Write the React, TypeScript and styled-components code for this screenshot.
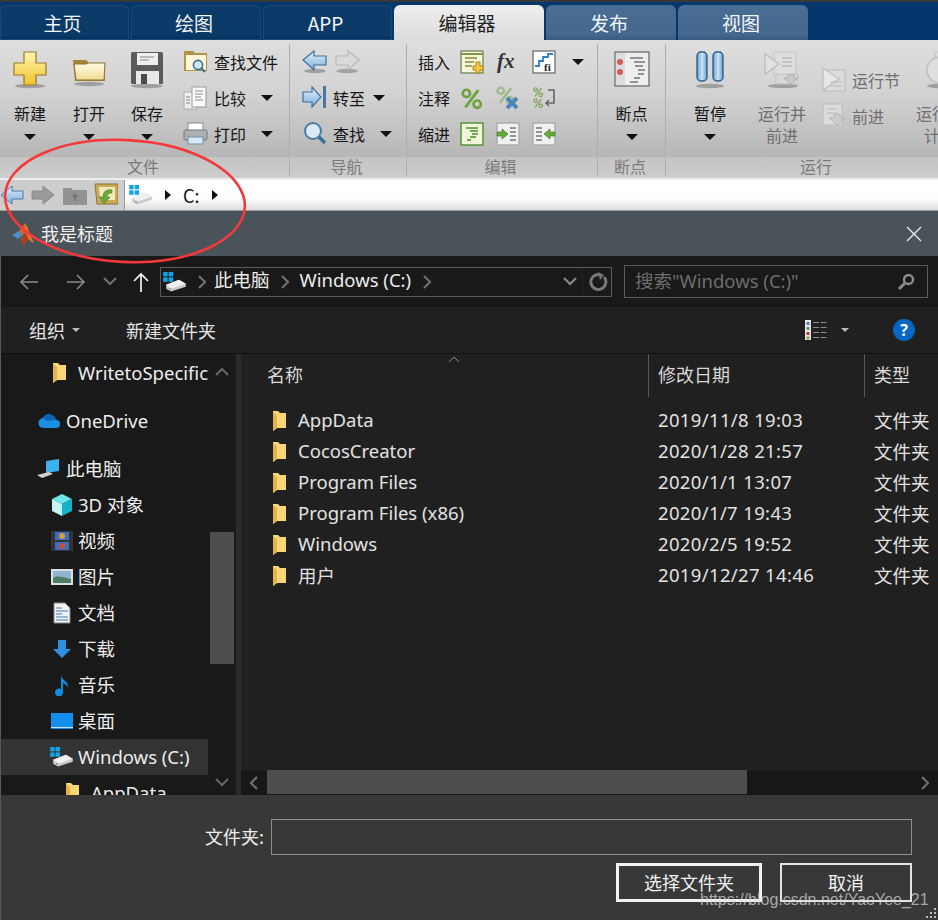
import React from "react";
import styled, { createGlobalStyle } from "styled-components";

const CJK = `"Noto Sans CJK SC", "Noto Sans", sans-serif`;
const UI = `"Noto Sans", "Noto Sans CJK SC", sans-serif`;

const Global = createGlobalStyle`
  html, body { margin: 0; padding: 0; background: #383838; overflow: hidden; }
  * { box-sizing: border-box; }
  #root { width: 938px; height: 920px; overflow: hidden; }
`;

const Page = styled.div`position: relative; width: 938px; height: 920px; overflow: hidden; display: flex; flex-direction: column; font-family: ${CJK};`;
const TabBar = styled.div`height: 38px; flex: none; margin-top: 2px; background: #04376b; display: flex; gap: 2px; align-items: flex-end; padding-top: 3px;`;
const Tab = styled.div<{ $w: number; $kind: "dark" | "active" | "light" }>`
  width: ${p => p.$w}px; height: 35px; flex: none; display: flex; align-items: center; justify-content: center;
  font-size: 19px; border-radius: 6px 6px 0 0; padding-right: 4px;
  color: ${p => p.$kind === "active" ? "#222" : "#f4f6f8"};
  background: ${p => p.$kind === "active" ? "linear-gradient(#eeeeee,#dcdcdc)" : p.$kind === "light" ? "linear-gradient(#4a6d93,#44678e 85%,#38597f)" : "linear-gradient(#0c3b69,#0a3a68 85%,#06305c)"};
  box-shadow: ${p => p.$kind === "dark" ? "inset 0 0 0 1px #1c4674" : "none"};
`;
const Ribbon = styled.div`height: 138px; flex: none; display: flex; background: linear-gradient(#dedede, #d2d2d2 40%, #b6b6b6 85%, #c4c4c4 85%, #cdcdcd);`;
const Group = styled.div<{ $w: number }>`width: ${p => p.$w}px; flex: none; display: flex; flex-direction: column; padding-top: 4px; position: relative;
  &:not(:last-child)::after { content: ""; position: absolute; right: 0; top: 4px; bottom: 3px; width: 1px; background: #aeaeae; }`;
const GroupBody = styled.div<{ $pad?: number }>`height: 113px; display: flex; padding-left: ${p => p.$pad ?? 0}px;`;
const GroupLabel = styled.div`height: 18px; padding-right: 4px; font-size: 16px; line-height: 18px; color: #7a7a7a; text-align: center;`;
const Big = styled.div<{ $w: number; $off?: boolean }>`width: ${p => p.$w}px; flex: none; display: flex; flex-direction: column; align-items: center; padding-top: 6px; font-size: 16px; color: ${p => p.$off ? "#6e6e6e" : "#161616"};`;
const BigIcon = styled.div`height: 40px; display: flex; align-items: center; justify-content: center;`;
const BigText = styled.div`margin-top: 12px; line-height: 22px; text-align: center; white-space: nowrap;`;
const Caret = styled.span<{ $m?: number }>`display: inline-block; width: 0; height: 0; flex: none; margin-top: ${p => p.$m ?? 0}px; border-left: 6px solid transparent; border-right: 6px solid transparent; border-top: 6px solid #111;`;
const BigCaret = styled(Caret)`margin-top: 10px;`;
const SmallCol = styled.div<{ $w: number; $pt?: number; $pl?: number }>`width: ${p => p.$w}px; flex: none; display: flex; flex-direction: column; gap: 12px; padding-top: ${p => p.$pt ?? 6}px; padding-left: ${p => p.$pl ?? 0}px;`;
const SmallRow = styled.div<{ $off?: boolean }>`height: 24px; display: flex; align-items: center; gap: 6px; font-size: 16px; white-space: nowrap; color: ${p => p.$off ? "#6e6e6e" : "#161616"};`;
const RowLabel = styled.span<{ $w?: number }>`width: ${p => p.$w ? p.$w + "px" : "auto"}; flex: none;`;
const IconGrid = styled.div`display: grid; grid-template-columns: 42px 36px 36px 40px 26px; grid-auto-rows: 24px; row-gap: 12px; padding: 6px 0 0 11px; font-size: 16px; color: #161616; align-items: center; justify-items: start;`;

const AddressBar = styled.div`height: 33px; flex: none; border-top: 2px solid #eee; display: flex; background: #cdcdcd; border-bottom: 1px solid #9a9a9a;`;
const AddressTools = styled.div`width: 124px; flex: none; display: flex; align-items: center; justify-content: space-between; padding: 0 6px 0 0;`;
const AddressPath = styled.div`flex: 1; display: flex; align-items: center; gap: 12px; padding-left: 4px; border-left: 1px solid #9a9a9a; background: linear-gradient(#fff 60%, #ddd); font-size: 18px; color: #111;`;
const PathCaret = styled.span`width: 0; height: 0; border-top: 5px solid transparent; border-bottom: 5px solid transparent; border-left: 6px solid #111;`;

const TitleBar = styled.div`height: 45px; flex: none; background: #4b535a; display: flex; align-items: center; padding: 0 16px 0 12px; color: #f2f2f2; font-size: 18px; gap: 5px;`;
const TitleText = styled.div`flex: 1; padding-bottom: 2px;`;

const Dialog = styled.div`flex: 1; min-height: 0; display: flex; flex-direction: column; border-left: 1px solid #55595c; font-family: ${UI};`;
const NavBar = styled.div`height: 51px; flex: none; background: #191919; display: flex; align-items: center; padding-left: 18px; color: #eee; font-size: 18.5px;`;
const NavBtn = styled.div<{ $w: number }>`width: ${p => p.$w}px; flex: none; display: flex; align-items: center; justify-content: flex-start;`;
const PathBox = styled.div`width: 452px; height: 30px; flex: none; border: 1px solid #5a5a5a; display: flex; align-items: center; padding-left: 2px;`;
const PathText = styled.span<{ $ml?: number }>`margin-left: ${p => p.$ml ?? 0}px; color: #ececec; line-height: 28px; padding-bottom: 3px;`;
const PathEnd = styled.div`margin-left: auto; height: 100%; display: flex; align-items: center; gap: 5px; padding-right: 3px;`;
const PathSep = styled.div`width: 1px; height: 100%; background: #242424;`;
const SearchBox = styled.div`width: 304px; height: 33px; flex: none; margin-left: 12px; border: 1px solid #5a5a5a; display: flex; align-items: center; justify-content: space-between; padding: 0 12px 0 10px; color: #6d6d6d; font-size: 18.5px;`;
const SearchText = styled.span`padding-bottom: 4px;`;
const ToolBar = styled.div`height: 47px; flex: none; background: #202020; border-bottom: 1px solid #111; display: flex; align-items: center; padding-left: 28px; padding-right: 23px; color: #e6e6e6; font-size: 18px;`;
const ToolCaret = styled.span<{ $ml: number }>`margin-left: ${p => p.$ml}px; width: 0; height: 0; border-left: 4px solid transparent; border-right: 4px solid transparent; border-top: 4px solid #bbb;`;
const ToolText = styled.span<{ $ml?: number }>`margin-left: ${p => p.$ml ?? 0}px;`;
const ToolSpacer = styled.div`flex: 1;`;
const HelpDot = styled.div`width: 22px; height: 22px; margin-left: 44px; border-radius: 50%; background: #0766c4; color: #fff; font-size: 16px; font-weight: 700; display: flex; align-items: center; justify-content: center;`;

const Body = styled.div`height: 441px; flex: none; display: flex; overflow: hidden;`;
const Side = styled.div`width: 235px; flex: none; display: flex; background: #191919;`;
const Tree = styled.div`width: 207px; flex: none; padding-top: 1px; overflow: hidden;`;
const TreeRow = styled.div<{ $pad: number; $top?: number; $sel?: boolean; $gap?: number }>`
  height: 36px; flex: none; margin-top: ${p => p.$top ?? 0}px; padding-left: ${p => p.$pad}px; display: flex; align-items: center; gap: ${p => p.$gap ?? 6}px;
  color: #ededed; font-size: 18.5px; white-space: nowrap; overflow: hidden; background: ${p => p.$sel ? "#333333" : "transparent"};
`;
const TreeText = styled.span`padding-bottom: 2px;`;
const TreeIcon = styled.div<{ $w: number }>`width: ${p => p.$w}px; flex: none; display: flex; justify-content: center; align-items: center;`;
const SideScroll = styled.div`width: 28px; flex: none; display: flex; flex-direction: column; align-items: center;`;
const Chevron = styled.div<{ $mt: number }>`margin-top: ${p => p.$mt}px; height: 12px; display: flex;`;
const Thumb = styled.div`width: 24px; height: 132px; margin-top: 153px; background: #4d4d4d;`;
const Gutter = styled.div`width: 5px; flex: none; background: #2b2b2b;`;
const Main = styled.div`flex: 1; min-width: 0; background: #202020; display: flex; flex-direction: column; position: relative;`;
const HeadRow = styled.div`height: 43px; flex: none; display: grid; grid-template-columns: 407px 216px 1fr; color: #d8d8d8; font-size: 18px; margin-bottom: 8px;`;
const HeadCell = styled.div<{ $pad: number; $line?: boolean }>`display: flex; align-items: center; padding-left: ${p => p.$pad}px; padding-bottom: 3px; white-space: nowrap; border-left: ${p => p.$line ? "1px solid #585858" : "none"}; overflow: hidden;`;
const SortMark = styled.div`position: absolute; left: 207px; top: 2px;`;
const FileRow = styled.div`height: 31px; flex: none; display: grid; grid-template-columns: 407px 216px 1fr; align-items: center; color: #e2e2e2; font-size: 18.5px; white-space: nowrap;`;
const FileName = styled.div`display: flex; align-items: center; gap: 11px; padding-left: 31px;`;
const FileText = styled.span`padding-bottom: 2px;`;
const FileCell = styled.div<{ $track?: number }>`padding-left: 10px; padding-bottom: 2px; overflow: hidden; letter-spacing: ${p => p.$track ?? 0}px;`;
const HScroll = styled.div`margin-top: auto; height: 25px; flex: none; background: #171717; display: flex; align-items: center; justify-content: space-between; position: relative; padding: 0 8px;`;
const HThumb = styled.div`position: absolute; left: 26px; top: 0; bottom: 1px; width: 480px; background: #4d4d4d;`;

const Footer = styled.div`flex: 1; background: #383838; color: #eee; font-size: 18px; font-family: ${CJK}; display: flex; flex-direction: column; align-items: flex-end; padding: 24px 26px 0 0;`;
const FieldRow = styled.div`display: flex; align-items: center; gap: 7px;`;
const FieldLabel = styled.span`padding-bottom: 2px;`;
const FieldInput = styled.div`width: 641px; height: 36px; border: 1px solid #8d8d8d;`;
const Buttons = styled.div`display: flex; margin-top: 8px; gap: 18px;`;
const Btn = styled.div<{ $w: number; $primary?: boolean }>`width: ${p => p.$w}px; height: 39px; padding-bottom: 2px; border: ${p => p.$primary ? "3px solid #f2f2f2" : "2px solid #e4e4e4"}; display: flex; align-items: center; justify-content: center; color: #f2f2f2;`;

const Circle = styled.svg`position: absolute; left: 0; top: 130px; pointer-events: none;`;
const Watermark = styled.div`position: absolute; left: 700px; top: 890px; font-family: "Liberation Sans", sans-serif; font-size: 16px; line-height: 20px; color: rgba(214,214,214,.72); white-space: nowrap;`;
const Grip = styled.svg`position: absolute; right: 0; bottom: 0;`;
const Defs = styled.svg`width: 0; height: 0; display: block; position: absolute;`;

const S = ({ w, h, children }: { w: number; h: number; children: React.ReactNode }) => (
  <svg width={w} height={h} viewBox={`0 0 ${w} ${h}`} style={{ display: "block", flex: "none" }}>{children}</svg>
);

const Shadow = ({ x, y, w }: { x: number; y: number; w: number }) => <ellipse cx={x} cy={y} rx={w} ry="2.2" fill="#000" opacity=".25" />;

const Plus = () => <S w={36} h={38}><Shadow x={18} y={35} w={15} /><path d="M12 1h12v11h10v12H24v10H12V24H2V12h10z" fill="url(#gy)" stroke="#9a7a28" strokeWidth="1.2" /></S>;
const Folder = () => <S w={36} h={38}><Shadow x={18} y={33} w={15} /><path d="M2 9h13l3 3h15l1 18H4z" fill="#a9843f" /><path d="M3 13h12l2-1h17l-1 17H5z" fill="url(#gf)" stroke="#8d6c2c" /></S>;
const Save = () => <S w={36} h={38}><Shadow x={18} y={35} w={16} /><rect x="2" y="1" width="32" height="32" rx="1.5" fill="#5b5b5b" /><rect x="8" y="2" width="21" height="12" fill="#efefef" /><path d="M11 6h14M11 9h9" stroke="#888" /><rect x="7" y="20" width="23" height="13" fill="#e8e8e8" /><rect x="12" y="23" width="6" height="10" fill="#4b4b4b" /></S>;
const FindFile = () => <S w={25} h={24}><path d="M1 1h9l2 2h12v18H1z" fill="#b49248" /><path d="M3 5h20v15H3z" fill="#fff7d8" /><circle cx="15" cy="15" r="4.6" fill="#cfe7f5" stroke="#3d6c94" strokeWidth="1.6" /><path d="M18 18l4 4" stroke="#3d6c94" strokeWidth="2.2" /></S>;
const Compare = () => <S w={25} h={24}><rect x="1" y="6" width="13" height="17" fill="#eee" stroke="#aaa" /><rect x="9" y="1" width="14" height="20" fill="#fafafa" stroke="#999" /><path d="M12 5h8M12 8h8M12 11h6M12 14h8M3 11h4M3 14h4M3 17h4" stroke="#888" /></S>;
const Printer = () => <S w={25} h={24}><rect x="5" y="1" width="15" height="8" fill="#fff" stroke="#888" /><rect x="1" y="8" width="23" height="10" rx="1.5" fill="#a9b0b6" stroke="#777" /><rect x="5" y="15" width="15" height="7" fill="#d9e8f3" stroke="#6f93ad" /></S>;
const ArrowL = () => <S w={26} h={24}><Shadow x={13} y={21} w={11} /><path d="M1 10L12 1v5h12v9H12v5z" fill="url(#gb)" stroke="#3f6f9d" strokeWidth="1.2" /></S>;
const ArrowR = () => <S w={26} h={24}><Shadow x={13} y={21} w={11} /><path d="M25 10L14 1v5H2v9h12v5z" fill="#dadada" stroke="#b8b8b8" strokeWidth="1.2" /></S>;
const GoTo = () => <S w={25} h={24}><path d="M1 6h9V1l9 10-9 10v-5H1z" fill="url(#gb)" stroke="#3f6f9d" strokeWidth="1.2" /><rect x="21" y="0" width="3" height="22" fill="#4a78a3" /></S>;
const Glass = () => <S w={25} h={26}><circle cx="11" cy="10" r="8" fill="#dbeaf6" stroke="#4a7ea8" strokeWidth="2" /><path d="M17 16l6 6" stroke="#3b6c92" strokeWidth="3.4" /></S>;
const PageIcon = ({ children, border = "#999", fill = "#eef3e6" }: { children?: React.ReactNode; border?: string; fill?: string }) => <S w={24} h={24}><rect x="1" y="1" width="22" height="22" fill={fill} stroke={border} strokeWidth="1.4" />{children}</S>;
const Insert = () => <PageIcon border="#7e8a60" fill="#f5f5d8"><path d="M1.5 4h21" stroke="#7e9650" strokeWidth="2" /><path d="M5 8h12M5 12h9M5 16h7" stroke="#8c8c3c" strokeWidth="1.5" /><path d="M16 12h4v4h3v4h-3v3h-4v-3h-3v-4h3z" fill="#f4c63d" stroke="#a68422" /></PageIcon>;
const PctMark = ({ c, x, y, s }: { c: string; x: number; y: number; s: number }) => <g transform={`translate(${x} ${y}) scale(${s})`} stroke={c} fill="none"><circle cx="5" cy="5" r="3.4" strokeWidth="2.4" /><circle cx="15" cy="15" r="3.4" strokeWidth="2.4" /><path d="M16 2L4 18" strokeWidth="2.6" /></g>;
const Comment = () => <S w={24} h={24}><PctMark c="#6fa23a" x={1} y={2} s={1.08} /></S>;
const Uncomment = () => <S w={24} h={24}><PctMark c="#9fb98a" x={0} y={0} s={.95} /><path d="M11 12l10 10M21 12L11 22" stroke="#4f86b9" strokeWidth="4" /></S>;
const Wrap = () => <S w={24} h={24}><PctMark c="#7fa55a" x={1} y={1} s={.52} /><PctMark c="#7fa55a" x={1} y={12} s={.52} /><path d="M16 4h6v13h-7M17 14l-3 3 3 3" stroke="#666" strokeWidth="1.6" fill="none" /></S>;
const Smart = () => <PageIcon border="#4e8f2f" fill="#eff6d9"><path d="M6 6h12M10 9h8M12 12h6M10 15h6M7 18h4" stroke="#4e8f2f" strokeWidth="1.5" /></PageIcon>;
const IndentIn = () => <PageIcon fill="#f1f1f1" border="#aaa"><path d="M14 6h6M14 10h6M14 14h6M14 18h6" stroke="#777" strokeWidth="1.4" /><path d="M1 10h5V7l6 5-6 5v-3H1z" fill="#69a83b" stroke="#487a25" strokeWidth=".7" /></PageIcon>;
const IndentOut = () => <PageIcon fill="#f1f1f1" border="#aaa"><path d="M4 6h6M4 10h6M4 14h6M4 18h6" stroke="#777" strokeWidth="1.4" /><path d="M23 10h-5V7l-6 5 6 5v-3h5z" fill="#69a83b" stroke="#487a25" strokeWidth=".7" /></PageIcon>;
const FiIcon = () => <S w={24} h={24}><rect x="1" y="1" width="22" height="22" fill="#fff" stroke="#777" strokeWidth="1.4" /><path d="M3 16h4v-5h4V7h5V4h5" stroke="#2e7fca" strokeWidth="1.8" fill="none" /><text x="12" y="21" fontSize="11" fontWeight="700" fill="#222" fontFamily="Liberation Serif, serif">fi</text></S>;
const Fx = () => <S w={24} h={24}><text x="1" y="18" fontSize="21" fontStyle="italic" fontWeight="700" fill="#333" fontFamily="Liberation Serif, serif">fx</text></S>;
const Breakpoints = () => <S w={36} h={38}><rect x="1" y="1" width="34" height="34" fill="#eee" stroke="#777" strokeWidth="1.4" /><rect x="2" y="2" width="9" height="32" fill="#dcdcdc" /><circle cx="6" cy="11" r="3" fill="#d65a50" /><circle cx="6" cy="21" r="3" fill="#d65a50" /><path d="M16 7h13M20 11h11M21 15h8M24 19h7M24 23h6M20 27h6M16 31h8" stroke="#777" strokeWidth="1.3" /></S>;
const Pause = () => <S w={30} h={38}><Shadow x={15} y={35} w={14} /><rect x="2" y="1" width="10" height="29" rx="4" fill="url(#gp)" stroke="#2f5f8e" strokeWidth="1.4" /><rect x="18" y="1" width="10" height="29" rx="4" fill="url(#gp)" stroke="#2f5f8e" strokeWidth="1.4" /></S>;
const RunAdvance = () => <S w={36} h={38}><Shadow x={19} y={35} w={15} /><path d="M10 1h22v24H10z" fill="#dedede" stroke="#c2c2c2" /><path d="M1 3l14 10L1 23z" fill="#e2e2e2" stroke="#bdbdbd" strokeWidth="1.3" /><path d="M18 7h10M18 11h10M18 15h10" stroke="#bbb" strokeWidth="1.3" /><path d="M12 23h22v10H12z" fill="#d8d8d8" stroke="#c0c0c0" /><path d="M24 24h6v3h4l-7 6-7-6h4z" fill="#c8c8c8" stroke="#b0b0b0" /></S>;
const RunSection = () => <S w={24} h={26}><rect x="3" y="3" width="20" height="21" fill="#dcdcdc" stroke="#bcbcbc" /><path d="M1 1l16 11L1 23z" fill="#e6e6e6" stroke="#bdbdbd" strokeWidth="1.2" /><path d="M8 15h13M8 19h13" stroke="#bbb" /></S>;
const Advance = () => <S w={24} h={26}><rect x="1" y="1" width="19" height="21" fill="#dcdcdc" stroke="#bcbcbc" /><path d="M5 6h10M5 10h10" stroke="#bbb" /><path d="M12 11h6v4h5l-8 7-8-7h5z" fill="#cecece" stroke="#b4b4b4" /></S>;
const RunTime = () => <S w={30} h={38}><rect x="10" y="1" width="20" height="12" fill="#dcdcdc" stroke="#c0c0c0" /><circle cx="15" cy="19" r="13" fill="#dedede" stroke="#bfbfbf" strokeWidth="1.5" /><path d="M15 11v8h6" stroke="#b8b8b8" strokeWidth="1.6" fill="none" /><Shadow x={15} y={35} w={13} /></S>;

const BarBack = () => <S w={24} h={22}><path d="M1 11L12 2v5h11v8H12v5z" fill="url(#gb)" stroke="#4a7ba8" /></S>;
const BarFwd = () => <S w={24} h={22}><path d="M23 11L12 2v5H1v8h11v5z" fill="#9a9a9a" stroke="#8a8a8a" /></S>;
const BarUp = () => <S w={24} h={20}><path d="M0 3h8l2 2h14v15H0z" fill="#929292" /><path d="M12 8l-4 4h3v4h2v-4h3z" fill="#777" /></S>;
const BarHist = () => <S w={24} h={24}><path d="M1 1h23v20H3z" fill="#c9ab57" stroke="#8a7232" /><path d="M5 4h16v13H6z" fill="#f4e8bf" /><path d="M18 7c-6-1-9 2-9 7H5l5 7 6-7h-3c0-3 2-4 5-4z" fill="#6da936" stroke="#457a1f" strokeWidth=".6" /></S>;
const Drive = ({ w = 24 }: { w?: number }) => <svg width={w} height={w * 0.9} viewBox="0 0 24 22" style={{ display: "block", flex: "none" }}><g fill="#10a5e8"><rect x="0" y="1" width="4.5" height="4.5" /><rect x="5.5" y="1" width="4.5" height="4.5" /><rect x="0" y="6.5" width="4.5" height="4.5" /><rect x="5.5" y="6.5" width="4.5" height="4.5" /></g><path d="M3 14l13-5 7 4v3L8 21l-5-3z" fill="#c9c9c9" /><path d="M3 14l13-5 7 4-15 5z" fill="#f0f0f0" /><circle cx="7" cy="18" r="1" fill="#4ec24e" /></svg>;
const MatlabLogo = () => <S w={24} h={24}><path d="M0 13l7-4 4 4-5 4z" fill="#4a90c4" /><path d="M7 9l6-8 3 5-5 7z" fill="#c9662d" /><path d="M13 1c3 5 6 14 9 20-3-1-5-3-6-5l-4 7-3-6 4-6z" fill="#e5742b" /><path d="M11 13l-2 6 3 4 4-7-2-5z" fill="#b33a22" /></S>;
const Close = () => <S w={16} h={16}><path d="M1 1l14 14M15 1L1 15" stroke="#f0f0f0" strokeWidth="1.3" /></S>;
const NavArrow = ({ dir, c }: { dir: "l" | "r"; c: string }) => <S w={20} h={18}>{dir === "l" ? <path d="M19 9H2M9 2L2 9l7 7" stroke={c} strokeWidth="1.6" fill="none" /> : <path d="M1 9h17M11 2l7 7-7 7" stroke={c} strokeWidth="1.6" fill="none" />}</S>;
const NavUp = () => <S w={16} h={20}><path d="M8 20V2M1 9l7-7 7 7" stroke="#f4f4f4" strokeWidth="1.7" fill="none" /></S>;
const ChevDown = ({ c = "#666", w = 14 }: { c?: string; w?: number }) => <svg width={w} height={9} viewBox="0 0 14 9" style={{ display: "block", flex: "none" }}><path d="M1 1l6 6 6-6" stroke={c} strokeWidth="2.2" fill="none" /></svg>;
const ChevUp = ({ c = "#666" }: { c?: string }) => <svg width={14} height={9} viewBox="0 0 14 9" style={{ display: "block" }}><path d="M1 8l6-6 6 6" stroke={c} strokeWidth="2.2" fill="none" /></svg>;
const ChevRight = ({ ml = 0, c = "#6f6f6f" }: { ml?: number; c?: string }) => <svg width={9} height={14} viewBox="0 0 9 14" style={{ display: "block", flex: "none", marginLeft: ml, zIndex: 1 }}><path d="M1 1l6 6-6 6" stroke={c} strokeWidth="2.2" fill="none" /></svg>;
const ChevLeft = ({ c = "#6f6f6f" }: { c?: string }) => <svg width={9} height={14} viewBox="0 0 9 14" style={{ display: "block", flex: "none", zIndex: 1 }}><path d="M8 1L2 7l6 6" stroke={c} strokeWidth="2.2" fill="none" /></svg>;
const Refresh = () => <S w={20} h={20}><path d="M16 5a7.5 7.5 0 1 1-4-2.4" stroke="#777" strokeWidth="3" fill="none" /><path d="M10 0l6 3-4 5z" fill="#777" /></S>;
const SearchMag = () => <S w={18} h={18}><circle cx="11.5" cy="6.5" r="4.5" fill="none" stroke="#8a8a8a" strokeWidth="2.4" /><path d="M8 10l-6 6" stroke="#8a8a8a" strokeWidth="3" /></S>;
const ViewIcon = () => <S w={22} h={20}><rect x="0" y="0" width="6" height="20" fill="#e8e8e8" /><rect x="1.5" y="2" width="3" height="3" fill="#4b7fa8" /><rect x="1.5" y="7" width="3" height="3" fill="#5b9a5b" /><rect x="1.5" y="12" width="3" height="3" fill="#b63a2c" /><rect x="1.5" y="16.5" width="3" height="3" fill="#a89a3a" /><path d="M8 2.5h14M8 7.5h14M8 12.5h14M8 17.5h14" stroke="#8a8a8a" strokeDasharray="6 1.5" /></S>;
const WinFolder = () => <S w={15} h={22}><path d="M1 1h5l2 2h6v15H5l-4 3z" fill="#f9d777" /><path d="M1 2v19l4-3V5z" fill="#e4b44a" /></S>;
const OneDrive = () => <S w={24} h={16}><path d="M7 15a5 5 0 0 1-1-10 7 7 0 0 1 13 2 4 4 0 0 1 0 8z" fill="#1a8fe3" /><path d="M6 5a7 7 0 0 1 13 2L10 8z" fill="#0b63b5" /></S>;
const PC = () => <S w={24} h={20}><path d="M9 2l13-2v12l-13 2z" fill="#3db0f0" /><path d="M0 16l12-3 4 2-11 4z" fill="#cfcfcf" /></S>;
const Cube = () => <S w={22} h={22}><path d="M11 0l10 5-10 5L1 5z" fill="#6fe4ea" /><path d="M1 5l10 5v12L1 17z" fill="#c6f4f6" /><path d="M21 5l-10 5v12l10-5z" fill="#15b3c5" /></S>;
const Film = () => <S w={22} h={20}><rect width="22" height="20" fill="#333" /><rect x="4" y="1" width="14" height="8" fill="#3a6fc4" /><rect x="4" y="11" width="14" height="8" fill="#3a6fc4" /><circle cx="11" cy="5" r="3" fill="#d8a03c" /><circle cx="11" cy="15" r="3" fill="#c4503c" /></S>;
const Picture = () => <S w={22} h={16}><rect width="22" height="16" fill="#dedede" /><rect x="2" y="2" width="18" height="12" fill="#8fb5d3" /><path d="M2 9c5-3 9-1 18 1v4H2z" fill="#4f7d66" /></S>;
const DocIcon = () => <S w={18} h={22}><path d="M1 1h11l5 5v15H1z" fill="#f2f2f2" stroke="#888" /><path d="M3 6h6M3 9h12M3 12h6M3 15h12M3 18h12" stroke="#3f7fbf" /></S>;
const Down = () => <S w={20} h={20}><path d="M6 1h8v9h5l-9 9-9-9h5z" fill="#2d8fe0" /></S>;
const Music = () => <S w={16} h={22}><path d="M7 1c0 5 8 6 7 13-1-3-3-4-5-5v9a4 4 0 1 1-2-3z" fill="#0f8ee0" /></S>;
const Desktop = () => <S w={22} h={16}><rect width="22" height="16" fill="#1490ec" /><rect y="14" width="22" height="1" fill="#bfe2fb" /></S>;
const Sort = () => <S w={12} h={7}><path d="M1 6l5-5 5 5" stroke="#8a8a8a" fill="none" /></S>;

const files = [
  ["AppData", "2019/11/8 19:03"],
  ["CocosCreator", "2020/1/28 21:57"],
  ["Program Files", "2020/1/1 13:07"],
  ["Program Files (x86)", "2020/1/7 19:43"],
  ["Windows", "2020/2/5 19:52"],
  ["用户", "2019/12/27 14:46"],
];

export default function App() {
  return (
    <Page>
      <Global />
      <Defs>
        <defs>
          <linearGradient id="gy" x1="0" y1="0" x2="0" y2="1"><stop offset="0" stopColor="#fff6b0" /><stop offset="1" stopColor="#f0c22e" /></linearGradient>
          <linearGradient id="gf" x1="0" y1="0" x2="0" y2="1"><stop offset="0" stopColor="#fffbe4" /><stop offset="1" stopColor="#f3dc95" /></linearGradient>
          <linearGradient id="gb" x1="0" y1="0" x2="0" y2="1"><stop offset="0" stopColor="#e2f0fa" /><stop offset="1" stopColor="#79b0dc" /></linearGradient>
          <linearGradient id="gp" x1="0" y1="0" x2="1" y2="0"><stop offset="0" stopColor="#5d9ccf" /><stop offset=".5" stopColor="#cfe5f5" /><stop offset="1" stopColor="#5d9ccf" /></linearGradient>
        </defs>
      </Defs>
      <TabBar>
        <Tab $w={129} $kind="dark">主页</Tab>
        <Tab $w={130} $kind="dark">绘图</Tab>
        <Tab $w={129} $kind="dark">APP</Tab>
        <Tab $w={150} $kind="active">编辑器</Tab>
        <Tab $w={130} $kind="light">发布</Tab>
        <Tab $w={130} $kind="light">视图</Tab>
      </TabBar>
      <Ribbon>
        <Group $w={290}>
          <GroupBody>
            <Big $w={60}><BigIcon><Plus /></BigIcon><BigText>新建</BigText><BigCaret /></Big>
            <Big $w={58}><BigIcon><Folder /></BigIcon><BigText>打开</BigText><BigCaret /></Big>
            <Big $w={58}><BigIcon><Save /></BigIcon><BigText>保存</BigText><BigCaret /></Big>
            <SmallCol $w={114} $pt={6} $pl={7}>
              <SmallRow><FindFile /><span>查找文件</span></SmallRow>
              <SmallRow><Compare /><RowLabel $w={41}>比较</RowLabel><Caret /></SmallRow>
              <SmallRow><Printer /><RowLabel $w={41}>打印</RowLabel><Caret /></SmallRow>
            </SmallCol>
          </GroupBody>
          <GroupLabel>文件</GroupLabel>
        </Group>
        <Group $w={117}>
          <GroupBody $pad={12}>
            <SmallCol $w={104} $pt={6}>
              <SmallRow><ArrowL /><ArrowR /></SmallRow>
              <SmallRow><GoTo /><RowLabel $w={34}>转至</RowLabel><Caret /></SmallRow>
              <SmallRow><Glass /><RowLabel $w={41}>查找</RowLabel><Caret /></SmallRow>
            </SmallCol>
          </GroupBody>
          <GroupLabel>导航</GroupLabel>
        </Group>
        <Group $w={191}>
          <GroupBody>
            <IconGrid>
              <span>插入</span><Insert /><Fx /><FiIcon /><Caret />
              <span>注释</span><Comment /><Uncomment /><Wrap /><i />
              <span>缩进</span><Smart /><IndentIn /><IndentOut /><i />
            </IconGrid>
          </GroupBody>
          <GroupLabel>编辑</GroupLabel>
        </Group>
        <Group $w={68}>
          <GroupBody>
            <Big $w={67}><BigIcon><Breakpoints /></BigIcon><BigText>断点</BigText><BigCaret /></Big>
          </GroupBody>
          <GroupLabel>断点</GroupLabel>
        </Group>
        <Group $w={304}>
          <GroupBody>
            <Big $w={88}><BigIcon><Pause /></BigIcon><BigText>暂停</BigText><BigCaret /></Big>
            <Big $w={56} $off><BigIcon><RunAdvance /></BigIcon><BigText>运行并<br />前进</BigText></Big>
            <SmallCol $w={104} $pt={24} $pl={12}>
              <SmallRow $off><RunSection /><span>运行节</span></SmallRow>
              <SmallRow $off><Advance /><span>前进</span></SmallRow>
            </SmallCol>
            <Big $w={52} $off><BigIcon><RunTime /></BigIcon><BigText>运行并<br />计时</BigText></Big>
          </GroupBody>
          <GroupLabel>运行</GroupLabel>
        </Group>
      </Ribbon>
      <AddressBar>
        <AddressTools><BarBack /><BarFwd /><BarUp /><BarHist /></AddressTools>
        <AddressPath><Drive /><PathCaret /><span>C:</span><PathCaret /></AddressPath>
      </AddressBar>
      <TitleBar><MatlabLogo /><TitleText>我是标题</TitleText><Close /></TitleBar>
      <Dialog>
        <NavBar>
          <NavBtn $w={47}><NavArrow dir="l" c="#8a8a8a" /></NavBtn>
          <NavBtn $w={37}><NavArrow dir="r" c="#8a8a8a" /></NavBtn>
          <NavBtn $w={30}><ChevDown c="#6f6f6f" /></NavBtn>
          <NavBtn $w={27}><NavUp /></NavBtn>
          <PathBox>
            <Drive />
            <ChevRight ml={11} />
            <PathText $ml={7}>此电脑</PathText>
            <ChevRight ml={11} />
            <PathText $ml={10}>Windows (C:)</PathText>
            <ChevRight ml={12} />
            <PathEnd><ChevDown c="#8a8a8a" /><PathSep /><Refresh /></PathEnd>
          </PathBox>
          <SearchBox><SearchText>搜索"Windows (C:)"</SearchText><SearchMag /></SearchBox>
        </NavBar>
        <ToolBar>
          <ToolText>组织</ToolText><ToolCaret $ml={7} />
          <ToolText $ml={46}>新建文件夹</ToolText>
          <ToolSpacer />
          <ViewIcon /><ToolCaret $ml={14} />
          <HelpDot>?</HelpDot>
        </ToolBar>
        <Body>
          <Side>
            <Tree>
              <TreeRow $pad={49} $gap={10}><TreeIcon $w={18}><WinFolder /></TreeIcon><TreeText>WritetoSpecific</TreeText></TreeRow>
              <TreeRow $pad={35} $top={12} $gap={5}><TreeIcon $w={25}><OneDrive /></TreeIcon><TreeText>OneDrive</TreeText></TreeRow>
              <TreeRow $pad={36} $top={12} $gap={5}><TreeIcon $w={24}><PC /></TreeIcon><TreeText>此电脑</TreeText></TreeRow>
              <TreeRow $pad={49} $gap={5}><TreeIcon $w={23}><Cube /></TreeIcon><TreeText>3D 对象</TreeText></TreeRow>
              <TreeRow $pad={49} $gap={5}><TreeIcon $w={23}><Film /></TreeIcon><TreeText>视频</TreeText></TreeRow>
              <TreeRow $pad={49} $gap={5}><TreeIcon $w={23}><Picture /></TreeIcon><TreeText>图片</TreeText></TreeRow>
              <TreeRow $pad={49} $gap={5}><TreeIcon $w={23}><DocIcon /></TreeIcon><TreeText>文档</TreeText></TreeRow>
              <TreeRow $pad={49} $gap={5}><TreeIcon $w={23}><Down /></TreeIcon><TreeText>下载</TreeText></TreeRow>
              <TreeRow $pad={49} $gap={5}><TreeIcon $w={23}><Music /></TreeIcon><TreeText>音乐</TreeText></TreeRow>
              <TreeRow $pad={49} $gap={5}><TreeIcon $w={23}><Desktop /></TreeIcon><TreeText>桌面</TreeText></TreeRow>
              <TreeRow $pad={49} $gap={5} $sel><TreeIcon $w={23}><Drive /></TreeIcon><TreeText>Windows (C:)</TreeText></TreeRow>
              <TreeRow $pad={63} $gap={11}><TreeIcon $w={16}><WinFolder /></TreeIcon><TreeText>AppData</TreeText></TreeRow>
            </Tree>
            <SideScroll>
              <Chevron $mt={13}><ChevUp /></Chevron>
              <Thumb />
              <Chevron $mt={114}><ChevDown /></Chevron>
            </SideScroll>
          </Side>
          <Gutter />
          <Main>
            <SortMark><Sort /></SortMark>
            <HeadRow>
              <HeadCell $pad={26}>名称</HeadCell>
              <HeadCell $pad={9} $line>修改日期</HeadCell>
              <HeadCell $pad={9} $line>类型</HeadCell>
            </HeadRow>
            {files.map(f => (
              <FileRow key={f[0]}>
                <FileName><WinFolder /><FileText>{f[0]}</FileText></FileName>
                <FileCell $track={0.35}>{f[1]}</FileCell>
                <FileCell>文件夹</FileCell>
              </FileRow>
            ))}
            <HScroll><ChevLeft /><HThumb /><ChevRight /></HScroll>
          </Main>
        </Body>
        <Footer>
          <FieldRow><FieldLabel>文件夹:</FieldLabel><FieldInput /></FieldRow>
          <Buttons>
            <Btn $w={146} $primary>选择文件夹</Btn>
            <Btn $w={132}>取消</Btn>
          </Buttons>
        </Footer>
      </Dialog>
      <Circle width="260" height="145" viewBox="0 130 260 145">
        <ellipse cx="125" cy="201" rx="120" ry="61" fill="none" stroke="#f5393a" strokeWidth="2.6" transform="rotate(3 125 201)" />
      </Circle>
      <Watermark>https://blog.csdn.net/YaoYee_21</Watermark>
      <Grip width="14" height="14" viewBox="0 0 14 14"><g fill="#bdbdbd"><rect x="10" y="2" width="2" height="2" /><rect x="6" y="6" width="2" height="2" /><rect x="10" y="6" width="2" height="2" /><rect x="2" y="10" width="2" height="2" /><rect x="6" y="10" width="2" height="2" /><rect x="10" y="10" width="2" height="2" /></g></Grip>
    </Page>
  );
}
